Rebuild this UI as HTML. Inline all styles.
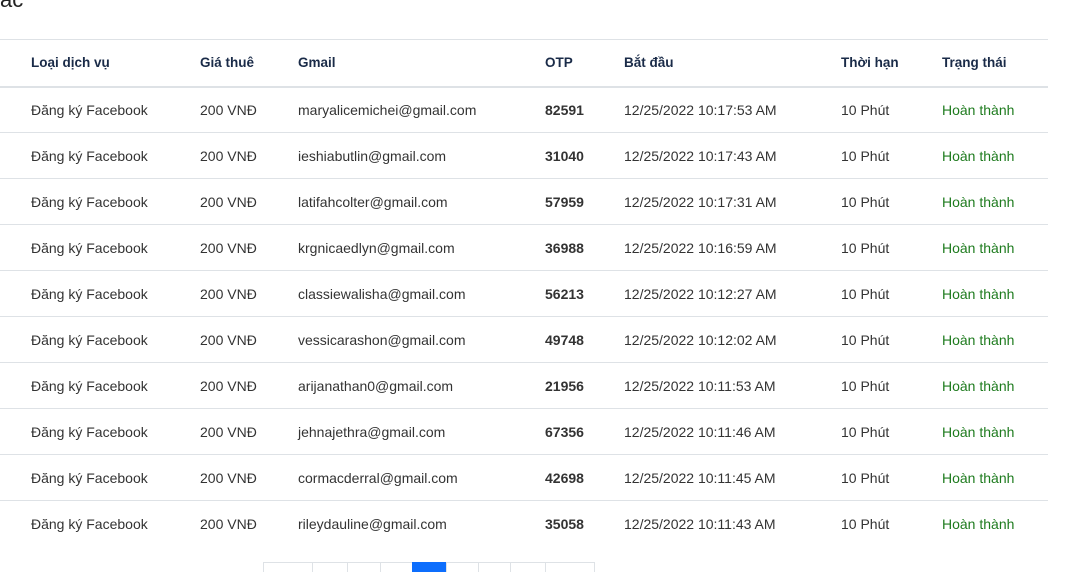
<!DOCTYPE html><html><head><meta charset="utf-8"><style>
body{margin:0;width:1088px;height:568px;overflow:hidden;background:#fff;font-family:"Liberation Sans","DejaVu Sans",sans-serif;position:relative}
.t{position:absolute;left:0;top:-13px;font-size:22px;color:#222}
table{position:absolute;left:0;top:39px;width:1048px;border-collapse:collapse;font-size:14px;color:#333;table-layout:fixed}
td,th{padding:0;text-align:left;white-space:nowrap;box-sizing:border-box}
th{height:47px;color:#1a2b48;font-weight:bold;font-size:13.5px;border-top:1px solid #dee2e6;border-bottom:2px solid #dee2e6;padding-bottom:1px}
td{height:46px;border-bottom:1px solid #dee2e6}
tr:last-child td{border-bottom:none}
.c1{padding-left:31px;width:200px}
.c2{width:98px}.c3{width:247px}.c4{width:79px}.c5{width:217px}.c6{width:101px}
.g{color:#1e7b1e}.b{font-weight:bold}
.p{position:absolute;top:562px;height:10px;border:1px solid #dee2e6;border-bottom:none;box-sizing:border-box}
</style></head><body>
<div class="t">ác</div>
<table>
<tr><th class="c1">Loại dịch vụ</th><th class="c2">Giá thuê</th><th class="c3">Gmail</th><th class="c4">OTP</th><th class="c5">Bắt đầu</th><th class="c6">Thời hạn</th><th>Trạng thái</th></tr>
<tr><td class="c1">Đăng ký Facebook</td><td>200 VNĐ</td><td>maryalicemichei@gmail.com</td><td class="b">82591</td><td>12/25/2022 10:17:53 AM</td><td>10 Phút</td><td class="g">Hoàn thành</td></tr>
<tr><td class="c1">Đăng ký Facebook</td><td>200 VNĐ</td><td>ieshiabutlin@gmail.com</td><td class="b">31040</td><td>12/25/2022 10:17:43 AM</td><td>10 Phút</td><td class="g">Hoàn thành</td></tr>
<tr><td class="c1">Đăng ký Facebook</td><td>200 VNĐ</td><td>latifahcolter@gmail.com</td><td class="b">57959</td><td>12/25/2022 10:17:31 AM</td><td>10 Phút</td><td class="g">Hoàn thành</td></tr>
<tr><td class="c1">Đăng ký Facebook</td><td>200 VNĐ</td><td>krgnicaedlyn@gmail.com</td><td class="b">36988</td><td>12/25/2022 10:16:59 AM</td><td>10 Phút</td><td class="g">Hoàn thành</td></tr>
<tr><td class="c1">Đăng ký Facebook</td><td>200 VNĐ</td><td>classiewalisha@gmail.com</td><td class="b">56213</td><td>12/25/2022 10:12:27 AM</td><td>10 Phút</td><td class="g">Hoàn thành</td></tr>
<tr><td class="c1">Đăng ký Facebook</td><td>200 VNĐ</td><td>vessicarashon@gmail.com</td><td class="b">49748</td><td>12/25/2022 10:12:02 AM</td><td>10 Phút</td><td class="g">Hoàn thành</td></tr>
<tr><td class="c1">Đăng ký Facebook</td><td>200 VNĐ</td><td>arijanathan0@gmail.com</td><td class="b">21956</td><td>12/25/2022 10:11:53 AM</td><td>10 Phút</td><td class="g">Hoàn thành</td></tr>
<tr><td class="c1">Đăng ký Facebook</td><td>200 VNĐ</td><td>jehnajethra@gmail.com</td><td class="b">67356</td><td>12/25/2022 10:11:46 AM</td><td>10 Phút</td><td class="g">Hoàn thành</td></tr>
<tr><td class="c1">Đăng ký Facebook</td><td>200 VNĐ</td><td>cormacderral@gmail.com</td><td class="b">42698</td><td>12/25/2022 10:11:45 AM</td><td>10 Phút</td><td class="g">Hoàn thành</td></tr>
<tr><td class="c1">Đăng ký Facebook</td><td>200 VNĐ</td><td>rileydauline@gmail.com</td><td class="b">35058</td><td>12/25/2022 10:11:43 AM</td><td>10 Phút</td><td class="g">Hoàn thành</td></tr>
</table>
<div class="p" style="left:263px;width:50px"></div>
<div class="p" style="left:312px;width:36px"></div>
<div class="p" style="left:347px;width:34px"></div>
<div class="p" style="left:380px;width:33px"></div>
<div class="p" style="left:412px;width:34px;background:#0d6efd;border-color:#0d6efd"></div>
<div class="p" style="left:446px;width:33px"></div>
<div class="p" style="left:478px;width:33px"></div>
<div class="p" style="left:510px;width:36px"></div>
<div class="p" style="left:545px;width:50px"></div>
</body></html>
